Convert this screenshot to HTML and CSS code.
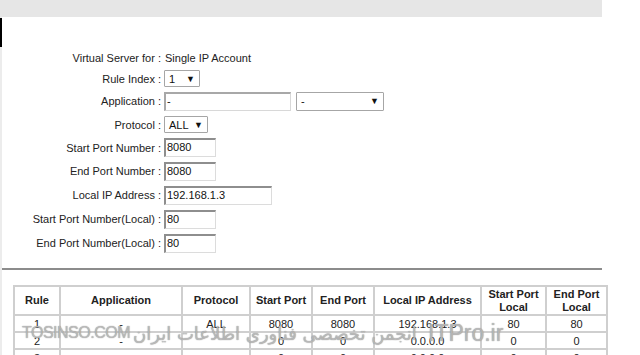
FILE: index.html
```html
<!DOCTYPE html>
<html lang="en">
<head>
    <meta charset="UTF-8">
    <title>Virtual Server</title>
    <link rel="stylesheet" href="styles.css">
</head>
<body>
    <div class="topbar"></div>

    <div class="page">
        <div class="marker"></div>

        <!-- rule form -->
        <div class="form">
            <div class="row row-short">
                <span class="label">Virtual Server for :</span>
                <span class="value">Single IP Account</span>
            </div>
            <div class="row row-short">
                <span class="label">Rule Index :</span>
                <div class="select sel-index"><span>1</span><span class="arrow">▼</span></div>
            </div>
            <div class="row">
                <span class="label">Application :</span>
                <div class="field">
                    <div class="input in-app">-</div>
                    <div class="select sel-app"><span>-</span><span class="arrow">▼</span></div>
                </div>
            </div>
            <div class="row">
                <span class="label">Protocol :</span>
                <div class="select sel-proto"><span>ALL</span><span class="arrow">▼</span></div>
            </div>
            <div class="row">
                <span class="label">Start Port Number :</span>
                <div class="input in-port">8080</div>
            </div>
            <div class="row">
                <span class="label">End Port Number :</span>
                <div class="input in-port">8080</div>
            </div>
            <div class="row">
                <span class="label">Local IP Address :</span>
                <div class="input in-ip">192.168.1.3</div>
            </div>
            <div class="row">
                <span class="label">Start Port Number(Local) :</span>
                <div class="input in-port">80</div>
            </div>
            <div class="row">
                <span class="label">End Port Number(Local) :</span>
                <div class="input in-port">80</div>
            </div>
        </div>

        <hr class="sep">

        <!-- rule list -->
        <table class="rules">
            <thead>
                <tr>
                    <th class="c-rule">Rule</th>
                    <th class="c-app">Application</th>
                    <th class="c-proto">Protocol</th>
                    <th class="c-sp">Start Port</th>
                    <th class="c-ep">End Port</th>
                    <th class="c-ip">Local IP Address</th>
                    <th class="c-spl">Start Port Local</th>
                    <th class="c-epl">End Port Local</th>
                </tr>
            </thead>
            <tbody>
                <tr><td>1</td><td>-</td><td>ALL</td><td>8080</td><td>8080</td><td>192.168.1.3</td><td>80</td><td>80</td></tr>
                <tr><td>2</td><td>-</td><td></td><td>0</td><td>0</td><td>0.0.0.0</td><td>0</td><td>0</td></tr>
                <tr><td>3</td><td>-</td><td></td><td>0</td><td>0</td><td>0.0.0.0</td><td>0</td><td>0</td></tr>
            </tbody>
        </table>
    </div>

    <!-- watermark over the table -->
    <span class="wm wm-site">TOSINSO.COM</span>
    <span class="wm wm-fa" dir="rtl">انجمن تخصصی فناوری اطلاعات ایران</span>
    <span class="wm wm-itpro">ITPro.ir</span>
</body>
</html>
```

FILE: styles.css
```css
body {
    margin: 0;
    background: #fff;
    font-family: "Liberation Sans", Arial, sans-serif;
    font-size: 11px;
    color: #222;
    position: relative;
    overflow: hidden;
    height: 355px;
}
.topbar {
    width: 602px;
    height: 17px;
    background: #e6e6e6;
}
.page {
    width: 600px;
    border-left: 2px solid #ececec;
    padding-top: 1px;
}
.marker {
    width: 2px;
    height: 29px;
    margin-left: -2px;
    background: #000;
}
.form {
    padding-top: 1px;
}
.row {
    display: flex;
    align-items: center;
    height: 24px;
}
.row:nth-child(4), .row:nth-child(5) {
    height: 23px;
}
.row-short {
    height: 20px;
}
.row-short + .row-short {
    height: 21px;
}
.label {
    width: 159px;
    text-align: right;
    flex-shrink: 0;
    white-space: nowrap;
}
.value {
    margin-left: 4px;
}
.field {
    display: flex;
    align-items: center;
    gap: 5px;
}
.label + .input, .label + .select, .label + .field {
    margin-left: 3px;
}
.input {
    box-sizing: border-box;
    height: 19px;
    line-height: 15px;
    padding: 0 2px 0 1px;
    border: 2px solid #dcdcdc;
    border-top-color: #8e8e8e;
    border-left-color: #8e8e8e;
    border-width: 2px 1px 1px 2px;
    background: #fff;
    color: #111;
}
.in-app {
    width: 127px;
    border-color: #d8d8d8;
    border-top-color: #a8a8a8;
    border-left-color: #a8a8a8;
}
.in-port {
    width: 52px;
}
.in-ip {
    width: 108px;
}
.select {
    box-sizing: border-box;
    display: flex;
    align-items: center;
    justify-content: space-between;
    height: 17px;
    padding: 0 4px 0 4px;
    border: 1px solid #a6a6a6;
    border-radius: 1px;
    background: #fff;
    color: #111;
}
.select .arrow {
    font-size: 9px;
    color: #111;
}
.sel-index {
    width: 36px;
}
.sel-app {
    width: 88px;
    height: 19px;
}
.sel-proto {
    width: 44px;
}
.sep {
    margin: 13px 0 0;
    height: 0;
    border: none;
    border-top: 2px solid #8c8c8c;
}
.rules {
    margin: 15px 0 0 11px;
    width: 579px;
    border-collapse: collapse;
    table-layout: fixed;
}
.rules th, .rules td {
    border: 2px solid #cfcfcf;
    text-align: center;
    padding: 0;
}
.rules th {
    height: 27px;
    font-weight: bold;
    line-height: 13px;
}
.rules td {
    height: 15px;
    line-height: 14px;
}
.c-rule { width: 44px; }
.c-app { width: 120px; }
.c-proto { width: 66px; }
.c-sp { width: 60px; }
.c-ep { width: 60px; }
.c-ip { width: 105px; }
.c-spl { width: 63px; }
.c-epl { width: 59px; }
.wm {
    position: absolute;
    color: rgba(205, 205, 205, 0.7);
    text-shadow: 0 0 1px #777;
    white-space: nowrap;
    line-height: 1;
}
.wm-site {
    left: 22px;
    top: 325px;
    font-size: 16px;
    letter-spacing: -0.5px;
}
.wm-fa {
    left: 133px;
    top: 325px;
    font-family: "DejaVu Sans", sans-serif;
    font-size: 18px;
}
.wm-itpro {
    left: 428px;
    top: 322px;
    font-size: 23px;
}
```
